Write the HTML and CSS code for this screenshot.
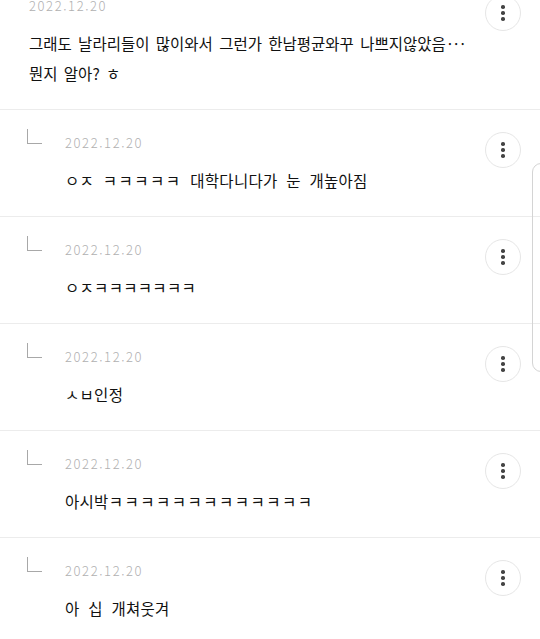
FILE: index.html
```html
<!DOCTYPE html>
<html lang="ko">
<head>
<meta charset="utf-8">
<link rel="stylesheet" href="styles.css">
</head>
<body>
<div class="list">
  <div class="row top-level">
    <div class="content">
      <div class="date">2022.12.20</div>
      <div class="text tight">그래도 날라리들이 많이와서 그런가 한남평균와꾸 나쁘지않았음<span class="dots">···</span><br>뭔지 알아? ㅎ</div>
    </div>
    <button class="more" aria-label="더보기"><span></span><span></span><span></span></button>
  </div>
  <div class="row reply">
    <div class="reply-mark"></div>
    <div class="content">
      <div class="date">2022.12.20</div>
      <div class="text">ㅇㅈ <span class="laugh">ㅋㅋㅋㅋㅋ</span> 대학다니다가 눈 개높아짐</div>
    </div>
    <button class="more" aria-label="더보기"><span></span><span></span><span></span></button>
  </div>
  <div class="row reply">
    <div class="reply-mark"></div>
    <div class="content">
      <div class="date">2022.12.20</div>
      <div class="text">ㅇㅈㅋㅋㅋㅋㅋㅋㅋ</div>
    </div>
    <button class="more" aria-label="더보기"><span></span><span></span><span></span></button>
  </div>
  <div class="row reply">
    <div class="reply-mark"></div>
    <div class="content">
      <div class="date">2022.12.20</div>
      <div class="text">ㅅㅂ인정</div>
    </div>
    <button class="more" aria-label="더보기"><span></span><span></span><span></span></button>
  </div>
  <div class="row reply">
    <div class="reply-mark"></div>
    <div class="content">
      <div class="date">2022.12.20</div>
      <div class="text">아시박<span class="laugh">ㅋㅋㅋㅋㅋㅋㅋㅋㅋㅋㅋㅋㅋ</span></div>
    </div>
    <button class="more" aria-label="더보기"><span></span><span></span><span></span></button>
  </div>
  <div class="row reply">
    <div class="reply-mark"></div>
    <div class="content">
      <div class="date">2022.12.20</div>
      <div class="text">아 십 개쳐웃겨</div>
    </div>
    <button class="more" aria-label="더보기"><span></span><span></span><span></span></button>
  </div>
</div>
<div class="edge-panel"></div>
</body>
</html>
```
FILE: styles.css
```css
html, body {
  margin: 0;
  padding: 0;
  background: #fff;
  overflow: hidden;
  height: 639px;
}
body {
  font-family: "Noto Sans CJK KR", "Noto Sans", sans-serif;
  color: #111;
}
.list {
  margin-top: -27px;
}
.row {
  display: flex;
  align-items: flex-start;
  padding: 22px 19px 21px 27px;
  border-bottom: 1px solid #ececec;
}
.row.top-level {
  padding-left: 29px;
}
.reply-mark {
  flex: none;
  width: 14px;
  height: 14px;
  margin-top: -3px;
  margin-right: 23px;
  border-left: 1.5px solid #a8a8a8;
  border-bottom: 1.5px solid #a8a8a8;
}
.content {
  flex: 1;
  min-width: 0;
}
.date {
  margin-top: 1px;
  height: 20px;
  line-height: 20px;
  font-size: 13px;
  font-weight: 300;
  letter-spacing: 1.6px;
  color: #b0b0b0;
}
.text {
  margin-top: 12px;
  font-size: 15.5px;
  line-height: 30px;
  letter-spacing: 0.3px;
  word-spacing: 4px;
  white-space: nowrap;
}
.text.tight {
  letter-spacing: 0;
  word-spacing: 2px;
}
.laugh {
  letter-spacing: 1.5px;
}
.dots {
  letter-spacing: 2px;
  margin-left: 2px;
}
.more {
  flex: none;
  width: 36px;
  height: 36px;
  padding: 0;
  border: 1px solid #e6e6e6;
  border-radius: 50%;
  background: #fff;
  display: flex;
  flex-direction: column;
  align-items: center;
  justify-content: center;
  gap: 2.5px;
}
.more span {
  width: 3.5px;
  height: 3.5px;
  border-radius: 50%;
  background: #444;
}
.edge-panel {
  position: absolute;
  left: 532px;
  top: 163px;
  width: 30px;
  height: 207px;
  border: 1.5px solid #d4d4d4;
  border-radius: 9px;
}
```
